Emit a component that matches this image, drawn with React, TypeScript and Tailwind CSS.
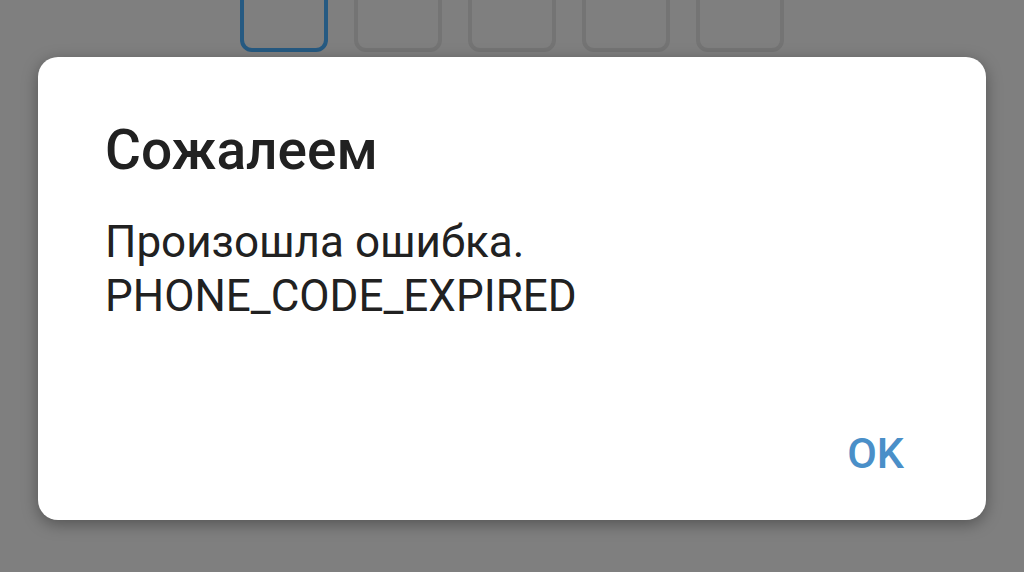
export default function App() {
  const boxes = [0, 1, 2, 3, 4];
  return (
    <div
      className="w-[1024px] h-[572px] bg-[#7f7f7f] overflow-hidden flex flex-col"
      style={{ fontFamily: 'Roboto, "Noto Sans", sans-serif' }}
    >
      {/* Code input boxes behind the dim */}
      <div className="flex gap-[26px] pl-[240px] -mt-[18px] h-[70px]">
        {boxes.map((i) => (
          <div
            key={i}
            className={`w-[88px] h-[70px] rounded-[12px] border-[4px] ${
              i === 0 ? 'border-[#265a82]' : 'border-[#747474]'
            }`}
          />
        ))}
      </div>

      {/* Dialog */}
      <div className="ml-[38px] mt-[5px] w-[948px] h-[463px] bg-white rounded-[20px] shadow-[0_4px_16px_rgba(0,0,0,0.35)] flex flex-col pl-[67px] pr-[82px]">
        <h1 className="mt-[61px] text-[55px] leading-[64px] font-medium text-[#212121]">Сожалеем</h1>
        <p className="mt-[33px] text-[44px] leading-[54px] text-[#212121]">
          Произошла ошибка.
          <br />
          PHONE_CODE_EXPIRED
        </p>
        <div className="mt-auto mb-[43px] flex justify-end">
          <button className="text-[43px] leading-[48px] font-medium text-[#4a8fc8]">OK</button>
        </div>
      </div>
    </div>
  );
}
